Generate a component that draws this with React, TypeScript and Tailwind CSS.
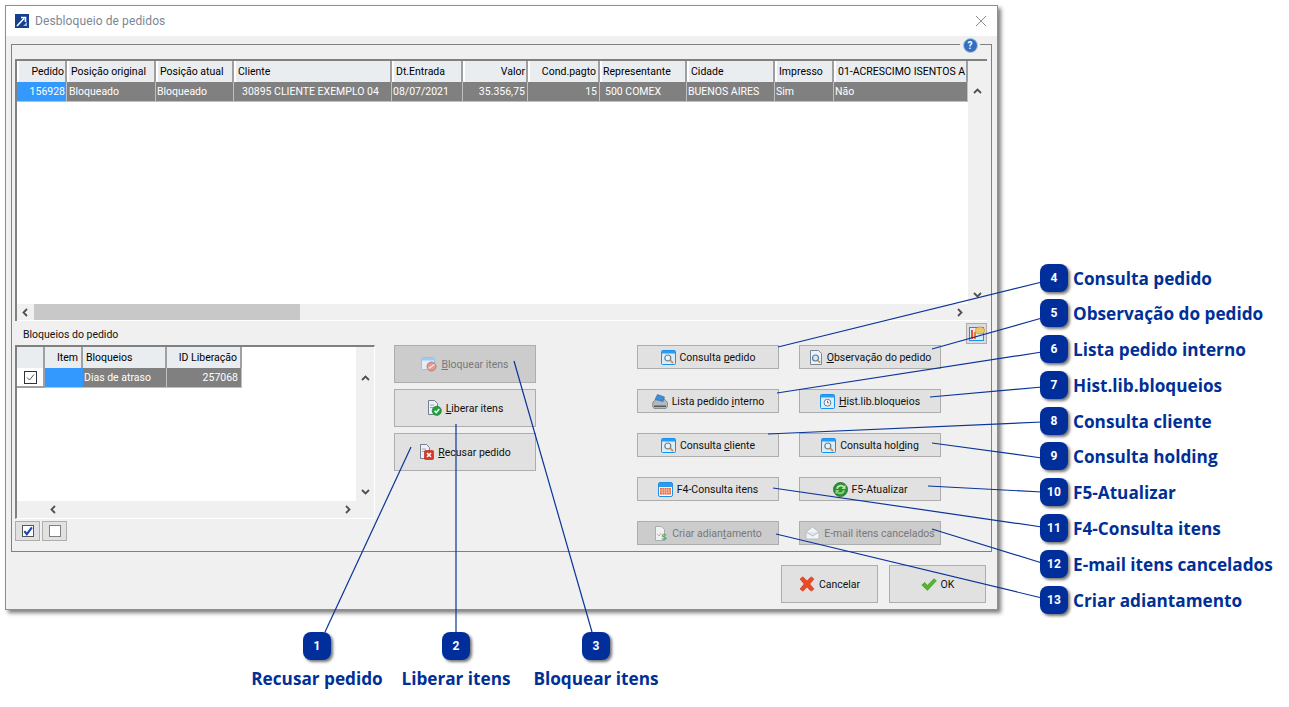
import React from 'react';

const gridCols = [
  { title: 'Pedido', w: 'w-[50px]', right: true, value: '156928', blue: true, head: 'pr-[1px]', cell: 'pr-[1px]' },
  { title: 'Posição original', w: 'w-[89px]', value: 'Bloqueado', head: 'pl-[2px]', cell: 'pl-[2px]' },
  { title: 'Posição atual', w: 'w-[78px]', value: 'Bloqueado', head: 'pl-[2px]', cell: 'pl-[1px]' },
  { title: 'Cliente', w: 'w-[158px]', value: '30895 CLIENTE EXEMPLO 04', head: 'pl-[2px]', cell: 'pl-[8px]' },
  { title: 'Dt.Entrada', w: 'w-[71px]', value: '08/07/2021', head: 'pl-[2px]', cell: 'pl-[1px]' },
  { title: 'Valor', w: 'w-[65px]', right: true, value: '35.356,75', head: 'pr-[1px]', cell: 'pr-[2px]' },
  { title: 'Cond.pagto', w: 'w-[72px]', right: true, value: '15', head: 'pr-[2px]', cell: 'pr-[2px]' },
  { title: 'Representante', w: 'w-[87px]', value: '500 COMEX', head: 'pl-[1px]', cell: 'pl-[5px]' },
  { title: 'Cidade', w: 'w-[88px]', value: 'BUENOS AIRES', head: 'pl-[2px]', cell: 'pl-[1px]' },
  { title: 'Impresso', w: 'w-[59px]', value: 'Sim', head: 'pl-[2px]', cell: 'pl-[1px]' },
  { title: '01-ACRESCIMO ISENTOS A', w: 'w-[134px]', value: 'Não', head: 'pl-[2px]', cell: 'pl-[1px]' },
];

const callouts = [
  { n: 4, label: 'Consulta pedido', y: 278 },
  { n: 5, label: 'Observação do pedido', y: 313 },
  { n: 6, label: 'Lista pedido interno', y: 349 },
  { n: 7, label: 'Hist.lib.bloqueios', y: 385 },
  { n: 8, label: 'Consulta cliente', y: 421 },
  { n: 9, label: 'Consulta holding', y: 456 },
  { n: 10, label: 'F5-Atualizar', y: 492 },
  { n: 11, label: 'F4-Consulta itens', y: 528 },
  { n: 12, label: 'E-mail itens cancelados', y: 564 },
  { n: 13, label: 'Criar adiantamento', y: 600 },
];

const bottomCallouts = [
  { n: 1, label: 'Recusar pedido', x: 317 },
  { n: 2, label: 'Liberar itens', x: 456 },
  { n: 3, label: 'Bloquear itens', x: 596 },
];

const lines = [
  [411, 447, 325, 632],
  [456, 424, 456, 632],
  [514, 361, 592, 632],
  [778, 347, 1042, 282],
  [932, 349, 1042, 318],
  [777, 393, 1042, 352],
  [930, 397, 1042, 387],
  [768, 434, 1042, 422],
  [932, 443, 1042, 458],
  [928, 486, 1042, 492],
  [773, 488, 1042, 527],
  [932, 529, 1042, 563],
  [776, 534, 1042, 598],
];

function Chevron({ dir }: { dir: 'up' | 'down' | 'left' | 'right' }) {
  const pts = {
    up: '1,6 4.5,2.5 8,6',
    down: '1,3 4.5,6.5 8,3',
    left: '6,1 2.5,4.5 6,8',
    right: '3,1 6.5,4.5 3,8',
  }[dir];
  return (
    <svg width="9" height="9" viewBox="0 0 9 9" className="shrink-0">
      <polyline points={pts} fill="none" stroke="#505050" strokeWidth="1.8" />
    </svg>
  );
}

function SearchIcon() {
  return (
    <svg width="15" height="15" viewBox="0 0 15 15" className="shrink-0">
      <rect x="0.5" y="0.5" width="14" height="14" rx="1" fill="#d8eefc" stroke="#1c8fe8" />
      <rect x="1" y="1" width="13" height="2.5" fill="#2a9cf0" />
      <circle cx="6.8" cy="8" r="3" fill="#e8f2f8" stroke="#6e7f8c" strokeWidth="1.2" />
      <line x1="9" y1="10.2" x2="12" y2="13" stroke="#e08a3c" strokeWidth="1.8" />
    </svg>
  );
}

function NoteIcon() {
  return (
    <svg width="14" height="15" viewBox="0 0 14 15" className="shrink-0">
      <path d="M1.5 0.5H9.5L12.5 3.5V14.5H1.5Z" fill="#eef2f6" stroke="#7c8794" />
      <circle cx="6.5" cy="8" r="3" fill="#d4e8f8" stroke="#4e7fa8" strokeWidth="1.2" />
      <line x1="8.6" y1="10.2" x2="11" y2="12.6" stroke="#d88a40" strokeWidth="1.6" />
    </svg>
  );
}

function PrinterIcon() {
  return (
    <svg width="16" height="15" viewBox="0 0 16 15" className="shrink-0">
      <path d="M1 8L4 5.5H13L15.5 8.5V12.5L14 14.5H2L0.5 12Z" fill="#b4b8bc" stroke="#70757a" strokeWidth="0.7" />
      <path d="M3 5.5L5.5 0.5L12.5 3L11 7.5Z" fill="#3a8ed8" stroke="#2a6aa8" strokeWidth="0.6" />
      <rect x="2" y="11.5" width="12" height="1.5" fill="#55595e" />
    </svg>
  );
}

function ClockIcon() {
  return (
    <svg width="15" height="15" viewBox="0 0 15 15" className="shrink-0">
      <rect x="0.5" y="0.5" width="14" height="14" rx="1" fill="#d8eefc" stroke="#1c8fe8" />
      <rect x="1" y="1" width="13" height="2.5" fill="#2a9cf0" />
      <circle cx="7.5" cy="8.7" r="3.4" fill="#f4f6f8" stroke="#6e7f8c" />
      <path d="M7.5 6.8V8.8H9.2" fill="none" stroke="#4a5560" strokeWidth="0.8" />
    </svg>
  );
}

function CalendarIcon() {
  return (
    <svg width="15" height="15" viewBox="0 0 15 15" className="shrink-0">
      <rect x="0.5" y="0.5" width="14" height="14" rx="1.5" fill="#f4f8fb" stroke="#1c8fe8" />
      <rect x="1" y="1" width="13" height="4" fill="#2a9cf0" />
      <rect x="2" y="6" width="11" height="6.5" fill="#ee6234" />
      <path d="M2 8H13M2 10.2H13M4.2 6V12.5M6.4 6V12.5M8.6 6V12.5M10.8 6V12.5" stroke="#fbd9c8" strokeWidth="0.6" />
    </svg>
  );
}

function RefreshIcon() {
  return (
    <svg width="15" height="15" viewBox="0 0 15 15" className="shrink-0">
      <circle cx="7.5" cy="7.5" r="7" fill="#2f8f34" stroke="#1f6d26" strokeWidth="0.8" />
      <path d="M3 6.5A4.8 4.8 0 0 1 11 4L12.5 2.8V7H8.5L10 5.4A3 3 0 0 0 5 7Z" fill="#b4e8a8" />
      <path d="M12 8.5A4.8 4.8 0 0 1 4 11L2.5 12.2V8H6.5L5 9.6A3 3 0 0 0 10 8Z" fill="#86d476" />
    </svg>
  );
}

function MoneyDocIcon() {
  return (
    <svg width="14" height="15" viewBox="0 0 14 15" className="shrink-0">
      <path d="M1.5 0.5H7.5L10.5 3.5V14.5H1.5Z" fill="#eef0f2" stroke="#a8aeb4" />
      <path d="M3 8L5 10L7 7" fill="none" stroke="#d09090" strokeWidth="0.8" />
      <text x="7.5" y="14" fontSize="9" fontWeight="700" fill="#5aa862" fontFamily="Liberation Sans">$</text>
    </svg>
  );
}

function MailIcon() {
  return (
    <svg width="15" height="14" viewBox="0 0 15 14" className="shrink-0">
      <path d="M1 6L7.5 1L14 6V13H1Z" fill="#f4f4f6" stroke="#b8bcc4" />
      <path d="M1 6L7.5 10L14 6" fill="#e0e6f0" stroke="#b8bcc4" />
    </svg>
  );
}

function BlockIcon() {
  return (
    <svg width="16" height="15" viewBox="0 0 16 15" className="shrink-0">
      <rect x="0.5" y="0.5" width="13" height="12" rx="1" fill="#e4eef8" stroke="#94c4ec" />
      <rect x="1" y="1" width="12" height="2.5" fill="#9ccaf0" />
      <circle cx="10.5" cy="9.5" r="4.5" fill="#e09a94" stroke="#c87870" />
      <line x1="7.5" y1="11.5" x2="13.5" y2="7.5" stroke="#f6e8e6" strokeWidth="1.4" />
    </svg>
  );
}

function DocBadgeIcon({ kind }: { kind: 'ok' | 'no' }) {
  return (
    <svg width="15" height="16" viewBox="0 0 15 16" className="shrink-0">
      <path d="M1.5 0.5H7.5L10.5 3.5V14.5H1.5Z" fill="#eef2f8" stroke="#74808e" />
      <line x1="3" y1="5" x2="7" y2="5" stroke="#9aa6b4" />
      <line x1="3" y1="7.5" x2="7" y2="7.5" stroke="#9aa6b4" />
      {kind === 'ok' ? (
        <>
          <circle cx="9.8" cy="10.8" r="4.6" fill="#1fa23a" stroke="#12762a" strokeWidth="0.6" />
          <path d="M7.6 10.8L9.3 12.6L12.2 9" fill="none" stroke="#ffffff" strokeWidth="1.5" />
        </>
      ) : (
        <>
          <rect x="5.5" y="6.5" width="9" height="9" rx="1" fill="#dc3626" stroke="#a82418" strokeWidth="0.6" />
          <path d="M8 9L12 13M12 9L8 13" stroke="#ffffff" strokeWidth="1.6" />
        </>
      )}
    </svg>
  );
}

function CancelIcon() {
  return (
    <svg width="16" height="16" viewBox="0 0 16 16" className="shrink-0">
      <path d="M1 3L4 0.8L8 5L12 0.8L15 3L10.8 8L15 13L12 15.2L8 11L4 15.2L1 13L5.2 8Z" fill="#ec4a24" stroke="#c8381a" strokeWidth="0.6" />
    </svg>
  );
}

function CheckIcon() {
  return (
    <svg width="16" height="13" viewBox="0 0 16 13" className="shrink-0">
      <path d="M0.8 7L3.8 4.5L6.2 7.5L13 0.8L15.4 2.8L6.4 12.4Z" fill="#55b52e" stroke="#3c8e20" strokeWidth="0.6" />
    </svg>
  );
}

function HelpIcon() {
  return (
    <div className="w-[15px] h-[15px] rounded-full bg-[#2f6fc4] border border-[#b7c7da] flex items-center justify-center text-white text-[10px] font-bold leading-none">
      ?
    </div>
  );
}

function PanelButton({ icon, children, disabled, h }: { icon: React.ReactNode; children: React.ReactNode; disabled?: boolean; h: string }) {
  return (
    <div
      className={`${h} flex items-center justify-center gap-[4px] border border-[#adadad] ${
        disabled ? 'bg-[#cccccc] text-[#787878]' : 'bg-[#e1e1e1] text-[#101010]'
      }`}
    >
      {icon}
      <span className="whitespace-nowrap pt-[1px]">{children}</span>
    </div>
  );
}

function MainGrid() {
  return (
    <div className="h-[262px] w-[972px] flex flex-col border-t-2 border-l-2 border-[#808080] bg-[#f0f0f0]">
      <div className="flex flex-1 min-h-0">
        <div className="w-[951px] bg-white">
          <div className="flex h-[21px] bg-[#e9edf0]">
            {gridCols.map((c) => (
              <div
                key={c.title}
                className={`${c.w} ${c.head} ${c.right ? 'text-right' : ''} border-r-2 border-[#a0a0a0] border-l-2 border-l-white leading-[21px] whitespace-nowrap overflow-hidden text-black`}
              >
                {c.title}
              </div>
            ))}
          </div>
          <div className="flex h-[20px] border-b border-[#c0c0c0]">
            {gridCols.map((c) => (
              <div
                key={c.title}
                className={`${c.w} ${c.cell} ${c.right ? 'text-right' : ''} ${
                  c.blue ? 'bg-[#3399ff]' : 'bg-[#808080]'
                } border-r border-[#c0c0c0] leading-[19px] whitespace-nowrap overflow-hidden text-white`}
              >
                {c.value}
              </div>
            ))}
          </div>
        </div>
        <div className="w-[18px] flex flex-col items-center justify-between pt-[26px] pb-[5px]">
          <Chevron dir="up" />
          <Chevron dir="down" />
        </div>
      </div>
      <div className="h-[17px] flex items-center pl-[4px] pr-[23px] border-b border-white bg-[#f0f0f0]">
        <Chevron dir="left" />
        <div className="h-full w-[266px] ml-[4px] bg-[#c8c8c8]" />
        <div className="flex-1" />
        <Chevron dir="right" />
      </div>
    </div>
  );
}

function BlocksGrid() {
  return (
    <div className="h-[174px] w-[360px] flex flex-col border-t-2 border-l-2 border-r border-b border-[#808080] border-r-white border-b-white bg-[#f0f0f0]">
      <div className="flex flex-1 min-h-0">
        <div className="w-[339px] bg-white">
          <div className="flex h-[21px] bg-[#f0f0f0]">
            <div className="w-[28px] bg-[#e9edf0] border-r-2 border-[#a0a0a0]" />
            <div className="w-[38px] bg-[#e9edf0] border-r-2 border-[#a0a0a0] text-right pr-[3px] leading-[21px]">Item</div>
            <div className="w-[84px] bg-[#e9edf0] border-r-2 border-[#a0a0a0] pl-[3px] leading-[21px]">Bloqueios</div>
            <div className="w-[75px] bg-[#e9edf0] border-r-2 border-[#a0a0a0] text-right pr-[3px] leading-[21px]">ID Liberação</div>
            <div className="flex-1 bg-white" />
          </div>
          <div className="flex h-[20px]">
            <div className="w-[28px] bg-white border-r-2 border-b-2 border-[#a0a0a0] flex items-center justify-center">
              <div className="w-[13px] h-[13px] border border-[#333333] flex items-center justify-center">
                <svg width="9" height="9" viewBox="0 0 9 9">
                  <path d="M1 4.5L3.5 7L8 1.5" fill="none" stroke="#555555" strokeWidth="1" />
                </svg>
              </div>
            </div>
            <div className="w-[38px] bg-[#3399ff] border-b border-[#c0c0c0]" />
            <div className="w-[84px] bg-[#808080] border-r border-b border-[#c0c0c0] pl-[1px] text-white leading-[19px]">Dias de atraso</div>
            <div className="w-[75px] bg-[#808080] border-r border-b border-[#c0c0c0] pr-[3px] text-right text-white leading-[19px]">257068</div>
          </div>
        </div>
        <div className="w-[18px] flex flex-col items-center justify-between pt-[27px] pb-[5px]">
          <Chevron dir="up" />
          <Chevron dir="down" />
        </div>
      </div>
      <div className="h-[17px] flex items-center pl-[32px] pr-[22px]">
        <Chevron dir="left" />
        <div className="flex-1" />
        <Chevron dir="right" />
      </div>
    </div>
  );
}

function Dialog() {
  return (
    <div className="absolute left-[5px] top-[5px] w-[993px] h-[605px] flex flex-col bg-[#f0f0f0] border border-[#8f8f8f] shadow-[3px_3px_4px_rgba(0,0,0,0.5)] text-[10.5px]">
      <div className="h-[30px] shrink-0 bg-white flex items-center pl-[9px] pr-[10px]">
        <svg width="14" height="14" viewBox="0 0 14 14" className="shrink-0">
          <rect width="14" height="14" fill="#15408f" />
          <path d="M2 12L9 4.5M6 3.5H10.5V8" fill="none" stroke="#ffffff" strokeWidth="1.6" />
          <path d="M8 12L12 8V12Z" fill="#9ab8e0" />
        </svg>
        <span className="ml-[6px] text-[12px] text-[#7d8794] tracking-[0.1px]">Desbloqueio de pedidos</span>
        <svg width="12" height="12" viewBox="0 0 12 12" className="ml-auto shrink-0">
          <path d="M1 1L11 11M11 1L1 11" stroke="#8c8c8c" strokeWidth="1" />
        </svg>
      </div>

      <div className="flex-1 flex flex-col px-[5px] pt-[8px]">
        <div className="relative h-[508px] border border-[#808080] px-[3px] pt-[14px]">
          <div className="absolute right-[11px] -top-[7px] w-[20px] flex justify-center bg-[#f0f0f0]">
            <HelpIcon />
          </div>
          <MainGrid />

          <div className="flex items-end justify-between h-[24px] pl-[8px] pr-[1px]">
            <span className="leading-[20px] text-[#101010]">Bloqueios do pedido</span>
            <div className="w-[21px] h-[21px] mb-[1px] bg-[#dcdcdc] border border-[#adadad] flex items-center justify-center">
              <svg width="16" height="15" viewBox="0 0 16 15">
                <rect x="0.5" y="1.5" width="14" height="13" fill="#d8eefc" stroke="#1c8fe8" />
                <rect x="2" y="4" width="2" height="9" fill="#e8502e" />
                <rect x="5" y="6" width="2" height="7" fill="#ef7b3a" />
                <ellipse cx="11" cy="4.5" rx="4.5" ry="3.5" fill="#f0c468" stroke="#b8862e" strokeWidth="0.6" />
              </svg>
            </div>
          </div>

          <div className="flex items-start">
            <div className="w-[360px] shrink-0">
              <BlocksGrid />
              <div className="flex gap-[2px] mt-[2px]">
                <div className="w-[25px] h-[20px] border border-[#adadad] bg-[#e1e1e1] flex items-center justify-center">
                  <div className="w-[12px] h-[12px] bg-white border border-[#555555] flex items-center justify-center">
                    <svg width="11" height="11" viewBox="0 0 11 11">
                      <path d="M1.5 5L4.2 8.5L9.8 1" fill="none" stroke="#1c48b0" strokeWidth="2.4" />
                    </svg>
                  </div>
                </div>
                <div className="w-[25px] h-[20px] border border-[#adadad] bg-[#e1e1e1] flex items-center justify-center">
                  <div className="w-[12px] h-[12px] bg-white border border-[#808080]" />
                </div>
              </div>
            </div>

            <div className="w-[142px] ml-[19px] shrink-0 flex flex-col gap-[6px]">
              <PanelButton h="h-[38px]" disabled icon={<BlockIcon />}><u>B</u>loquear itens</PanelButton>
              <PanelButton h="h-[38px]" icon={<DocBadgeIcon kind="ok" />}><u>L</u>iberar itens</PanelButton>
              <PanelButton h="h-[38px]" icon={<DocBadgeIcon kind="no" />}><u>R</u>ecusar pedido</PanelButton>
            </div>

            <div className="ml-[101px] grid grid-cols-[142px_142px] gap-x-[20px] gap-y-[20px]">
              <PanelButton h="h-[24px]" icon={<SearchIcon />}>Consulta <u>p</u>edido</PanelButton>
              <PanelButton h="h-[24px]" icon={<NoteIcon />}><u>O</u>bservação do pedido</PanelButton>
              <PanelButton h="h-[24px]" icon={<PrinterIcon />}>Lista pedido <u>i</u>nterno</PanelButton>
              <PanelButton h="h-[24px]" icon={<ClockIcon />}><u>H</u>ist.lib.bloqueios</PanelButton>
              <PanelButton h="h-[24px]" icon={<SearchIcon />}>Consulta <u>c</u>liente</PanelButton>
              <PanelButton h="h-[24px]" icon={<SearchIcon />}>Consulta hol<u>d</u>ing</PanelButton>
              <PanelButton h="h-[24px]" icon={<CalendarIcon />}>F4-Consulta itens</PanelButton>
              <PanelButton h="h-[24px]" icon={<RefreshIcon />}>F5-Atualizar</PanelButton>
              <PanelButton h="h-[24px]" disabled icon={<MoneyDocIcon />}>Criar adian<u>t</u>amento</PanelButton>
              <PanelButton h="h-[24px]" disabled icon={<MailIcon />}>E-mail itens cancelados</PanelButton>
            </div>
          </div>
        </div>

        <div className="flex justify-end gap-[11px] mt-[13px] pr-[6px]">
          <div className="w-[97px]">
            <PanelButton h="h-[38px]" icon={<CancelIcon />}>Cancelar</PanelButton>
          </div>
          <div className="w-[97px]">
            <PanelButton h="h-[38px]" icon={<CheckIcon />}>OK</PanelButton>
          </div>
        </div>
      </div>
    </div>
  );
}

function Badge({ n }: { n: number }) {
  return (
    <div className="w-[28px] h-[28px] shrink-0 rounded-[8px] bg-[#002f9c] shadow-[2px_2px_3px_rgba(0,0,0,0.55)] flex items-center justify-center text-white text-[12px] font-bold">
      {n}
    </div>
  );
}

export default function App() {
  return (
    <div className="relative w-[1289px] h-[707px] bg-white overflow-hidden font-['Roboto',sans-serif]">
      <Dialog />

      <svg width="1289" height="707" className="absolute left-0 top-0 pointer-events-none">
        {lines.map(([x1, y1, x2, y2], i) => (
          <line key={i} x1={x1} y1={y1} x2={x2} y2={y2} stroke="#0a3499" strokeWidth="1.2" />
        ))}
      </svg>

      {callouts.map((c) => (
        <div key={c.n} className="absolute left-[1040px] flex items-center gap-[5px]" style={{ top: c.y - 14 }}>
          <Badge n={c.n} />
          <span className="mt-[2px] font-['Open_Sans',sans-serif] font-bold text-[17.2px] text-[#002f96] whitespace-nowrap">{c.label}</span>
        </div>
      ))}

      {bottomCallouts.map((c) => (
        <div key={c.n} className="absolute top-[632px] w-[160px] flex flex-col items-center gap-[6px]" style={{ left: c.x - 80 }}>
          <Badge n={c.n} />
          <span className="font-['Open_Sans',sans-serif] font-bold text-[17.2px] leading-[26px] text-[#002f96] whitespace-nowrap">{c.label}</span>
        </div>
      ))}
    </div>
  );
}
